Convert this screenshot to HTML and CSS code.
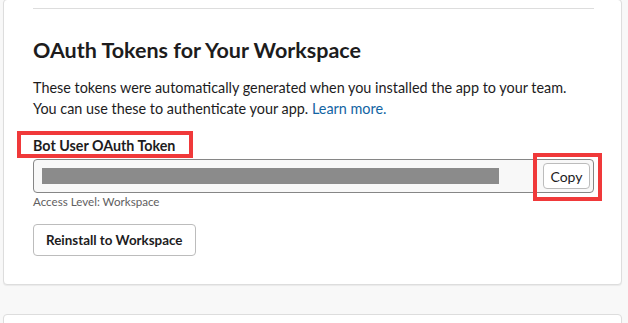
FILE: index.html
```html
<!DOCTYPE html>
<html lang="en">
<head>
  <meta charset="UTF-8">
  <meta name="viewport" content="width=device-width, initial-scale=1.0">
  <title>OAuth &amp; Permissions</title>
  <link rel="stylesheet" href="styles.css">
</head>
<body>
  <div class="page">
    <section class="card">
      <hr class="divider">
      <h2>OAuth Tokens for Your Workspace</h2>
      <p class="intro">
        These tokens were automatically generated when you installed the app to your team.<br>
        You can use these to authenticate your app. <a href="#">Learn more.</a>
      </p>

      <div class="field">
        <label class="field-label marked">Bot User OAuth Token</label>
        <div class="token-box">
          <span class="token-mask"></span>
          <button class="btn btn-copy marked-btn">Copy</button>
        </div>
        <div class="hint">Access Level: Workspace</div>
      </div>

      <button class="btn btn-reinstall">Reinstall to Workspace</button>
    </section>

    <section class="card next"></section>
  </div>
</body>
</html>
```

FILE: styles.css
```css
body {
  margin: 0;
  background: #f8f8f8;
  font-family: Lato, "Open Sans", sans-serif;
  color: #1d1c1d;
}
.page {
  padding: 0 6px 0 3px;
}
.card {
  background: #fff;
  border: 1px solid #dddddd;
  border-radius: 4px;
  box-shadow: 0 1px 1px rgba(0, 0, 0, 0.06);
  margin-top: -1px;
  padding: 8px 27px 28px 29px;
}
.card.next {
  margin-top: 29px;
  height: 60px;
}
.divider {
  border: 0;
  border-top: 1px solid #dddddd;
  margin: 0;
}
h2 {
  font-size: 21.5px;
  line-height: 28px;
  font-weight: 700;
  margin: 27px 0 0;
}
.intro {
  font-size: 14.4px;
  line-height: 21px;
  margin: 13px 0 0;
}
.intro a {
  color: #1264a3;
  text-decoration: none;
}
.field {
  margin-top: 16px;
}
.field-label {
  display: inline-block;
  font-size: 14.3px;
  line-height: 20px;
  font-weight: 700;
}
.marked {
  position: relative;
}
.marked::after {
  content: "";
  position: absolute;
  left: -16px;
  right: -18px;
  top: -5px;
  bottom: -2px;
  border: 4px solid #f0393a;
}
.token-box {
  margin-top: 3px;
  height: 32px;
  border: 1px solid #868686;
  border-radius: 4px;
  background: #f8f8f8;
  display: flex;
  align-items: center;
  justify-content: space-between;
  padding: 0 3px 0 8px;
}
.token-mask {
  width: 457px;
  height: 16px;
  background: #8b8b8b;
}
.btn {
  font-family: Lato, "Open Sans", sans-serif;
  background: #fff;
  color: #1d1c1d;
  border: 1px solid #bcbcbc;
  border-radius: 4px;
  cursor: pointer;
}
.btn-copy {
  position: relative;
  height: 26px;
  width: 47px;
  padding: 0;
  font-size: 14px;
}
.marked-btn::after {
  content: "";
  position: absolute;
  left: -11px;
  right: -13px;
  top: -11px;
  bottom: -13px;
  border: 4px solid #f0393a;
}
.hint {
  font-size: 11.6px;
  line-height: 16px;
  color: #616061;
  margin-top: 1px;
}
.btn-reinstall {
  margin-top: 14px;
  height: 32px;
  padding: 0 12px;
  font-size: 13.4px;
  font-weight: 700;
}
```
